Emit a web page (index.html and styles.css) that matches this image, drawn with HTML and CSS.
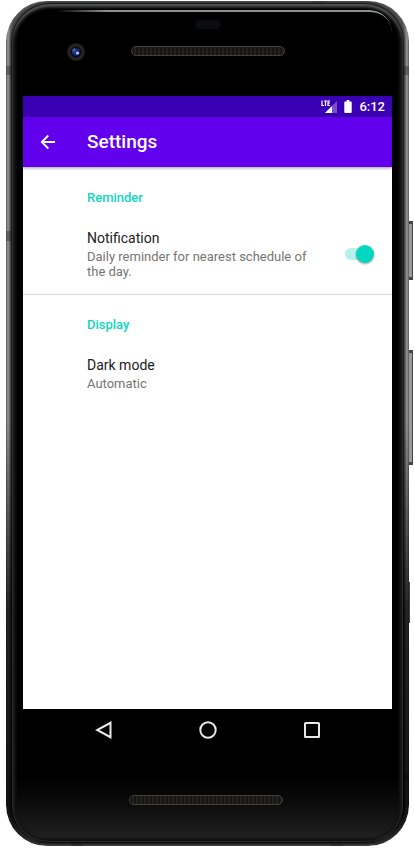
FILE: index.html
```html
<!DOCTYPE html>
<html lang="en">
<head>
<meta charset="utf-8">
<meta name="viewport" content="width=device-width, initial-scale=1">
<title>Settings</title>
<link rel="stylesheet" href="styles.css">
</head>
<body>
<div class="phone">
  <span class="key key-power"></span>
  <span class="key key-volume"></span>
  <span class="key key-lower"></span>
  <div class="body">
    <span class="seam seam-left-top"></span>
    <span class="seam seam-left-mid"></span>
    <span class="seam seam-right-top"></span>
    <span class="seam seam-right-bottom"></span>
    <span class="seam seam-top"></span>
    <span class="seam seam-foot-left"></span>
    <span class="seam seam-foot-right"></span>
    <div class="glass">
      <div class="forehead">
        <span class="sensor"></span>
        <svg class="camera" viewBox="0 0 18 18" aria-hidden="true">
          <circle cx="9" cy="9" r="8.8" fill="#242322"/>
          <circle cx="9" cy="9" r="5.4" fill="#080b20"/>
          <circle cx="9" cy="9" r="3.8" fill="#1b286c"/>
          <path d="M5 7a4 4 0 0 1 3-2l1 3-3 2z" fill="#344894"/>
          <circle cx="10.5" cy="10" r="1.6" fill="#b3c5ff"/>
          <circle cx="7.3" cy="6.8" r=".6" fill="#8396df"/>
        </svg>
        <span class="speaker"></span>
      </div>
      <main class="screen">
        <div class="statusbar">
          <svg class="signal" viewBox="0 0 16 14" aria-hidden="true">
            <path d="M16 1v12H4z" fill="#fff" opacity=".32"/>
            <path d="M11 6v7H4z" fill="#fff"/>
            <path d="M1 .5v5h2M3 1h3M4.500 1v5M9 1H7v4.500h2M7 3h2" fill="none" stroke="#fff" stroke-width="1.200"/>
          </svg>
          <svg class="battery" viewBox="0 0 8 14" aria-hidden="true">
            <path d="M2.500 0h3v1.500H7q1 0 1 1V13q0 1-1 1H1q-1 0-1-1V2.500q0-1 1-1h1.500z" fill="#fff"/>
          </svg>
          <time>6:12</time>
        </div>
        <header class="appbar">
          <button class="back" type="button" aria-label="Navigate up">
            <svg viewBox="0 0 16 16" aria-hidden="true"><path d="M15 8H2M8.300 1.500 1.800 8l6.500 6.500" fill="none" stroke="#fff" stroke-width="1.800"/></svg>
          </button>
          <h1>Settings</h1>
        </header>
        <section class="group">
          <h2>Reminder</h2>
          <div class="item">
            <label class="copy" for="notification">
              <span class="name">Notification</span>
              <span class="summary">Daily reminder for nearest schedule of the day.</span>
            </label>
            <input class="switch" id="notification" type="checkbox" role="switch" checked>
          </div>
        </section>
        <section class="group">
          <h2>Display</h2>
          <button class="item" type="button">
            <span class="copy">
              <span class="name">Dark mode</span>
              <span class="summary">Automatic</span>
            </span>
          </button>
        </section>
      </main>
      <nav class="navbar" aria-label="System">
        <button type="button" aria-label="Back"><svg viewBox="0 0 18 18"><path d="M15.500 1.800v14.400L2.200 9z"/></svg></button>
        <button type="button" aria-label="Home"><svg viewBox="0 0 18 18"><circle cx="9" cy="9" r="7.700"/></svg></button>
        <button type="button" aria-label="Overview"><svg viewBox="0 0 18 18"><rect x="2" y="2" width="14" height="14" rx=".5"/></svg></button>
      </nav>
      <div class="chin"><span class="speaker"></span></div>
    </div>
  </div>
</div>
</body>
</html>
```
FILE: styles.css
```css
* { box-sizing: border-box; }

body {
  margin: 0;
  background: #fff;
  font-family: Roboto, "Liberation Sans", sans-serif;
}

h1, h2 { margin: 0; font-weight: 500; }

button {
  border: 0;
  padding: 0;
  background: none;
  font: inherit;
  text-align: left;
  cursor: pointer;
}

svg { display: block; }

/* Handset */
.phone {
  position: relative;
  display: flex;
  min-height: 100vh;
  padding: 1px 6px 8px;
}

.body {
  position: relative;
  flex: 1;
  display: flex;
  padding: 3px 6px 4px;
  overflow: hidden;
  border-radius: 41px;
  background:
    linear-gradient(#0000 calc(100% - 20px), #111 calc(100% - 8px), #777 100%) center / calc(100% - 70px) 100% no-repeat,
    linear-gradient(90deg, #555, #999 2px, #6668 5px, #0000 7px, #0000 calc(100% - 7px), #6668 calc(100% - 5px), #999 calc(100% - 2px), #555),
    #555;
}

.body::after {
  content: "";
  position: absolute;
  inset: 0;
  background: linear-gradient(#0000 50%, #000b 72%, #000d 96%, #0006 100%);
  pointer-events: none;
  border-radius: 41px;
  padding: 0 6px 4px;
  mask: linear-gradient(#000 0 0) content-box exclude, linear-gradient(#000 0 0);
}

.glass {
  position: relative;
  flex: 1;
  display: flex;
  flex-direction: column;
  padding: 0 11px;
  border-radius: 38px;
  background: linear-gradient(#000 calc(100% - 65px), #0c0c0c calc(100% - 38px), #202020 calc(100% - 5px), #080808);
  box-shadow: inset 0 3px 3px #555, inset 4px 0 3px #141414, inset -4px 0 3px #141414, inset 0 -1px #444, 0 0 3px 1px #000;
}

.glass::before {
  content: "";
  position: absolute;
  top: 6px;
  left: 44px;
  right: 11px;
  height: 20px;
  border-top: 2px solid #899291;
  border-radius: 0 24px 0 0;
  mask: linear-gradient(90deg, #0000, #000 50px);
}

.key {
  position: absolute;
  right: 2px;
  width: 5px;
  border: 1px solid #444;
  border-width: 3px 1px;
  background: #999;
}

.key-power { top: 221px; height: 59px; }
.key-volume { top: 350px; height: 115px; }
.key-lower { top: 582px; right: 5px; width: 2px; height: 41px; background: #444; }

.seam { position: absolute; background: #4449; }
.seam-left-top, .seam-right-top { top: 65px; width: 6px; height: 9px; }
.seam-left-mid { top: 230px; width: 6px; height: 10px; left: 0; }
.seam-left-top { left: 0; }
.seam-right-top { right: 0; }
.seam-right-bottom { right: 0; top: 772px; width: 6px; height: 9px; }
.seam-top { top: 0; right: 84px; width: 12px; height: 4px; }
.seam-foot-left { bottom: 0; left: 65px; width: 12px; height: 4px; }
.seam-foot-right { bottom: 0; right: 66px; width: 12px; height: 4px; }

.forehead {
  position: relative;
  display: flex;
  flex-direction: column;
  align-items: center;
  height: 92px;
}

.sensor {
  width: 26px;
  height: 9px;
  margin-top: 16px;
  border-radius: 5px;
  background: #0b0c11;
}

.camera {
  position: absolute;
  top: 39px;
  left: 44px;
  width: 18px;
  height: 18px;
}

.speaker {
  width: 154px;
  height: 10px;
  margin-top: 17px;
  border: 1px solid #43423f;
  border-radius: 5px;
  background: repeating-linear-gradient(90deg, #171614 0 2px, #24221f 2px 4px);
}

/* Screen */
.screen {
  flex: 1;
  background: #fff;
}

.statusbar {
  display: flex;
  justify-content: flex-end;
  align-items: center;
  gap: 7px;
  height: 21px;
  padding-right: 7px;
  background: #3a00b3;
  color: #fff;
}

.signal { width: 16px; height: 14px; }
.battery { width: 8px; height: 13px; }
.statusbar time { font-size: 13px; font-weight: 500; line-height: 21px; }

.appbar {
  display: flex;
  align-items: center;
  height: 50px;
  background: #6200ee;
  color: #fff;
  box-shadow: 0 1px 3px #0006;
}

.back {
  width: 64px;
  padding: 0 17px;
}

.back svg { width: 16px; height: 16px; }
.appbar h1 { font-size: 19px; line-height: 24px; }

.group { padding: 23px 0 15px; }
.group + .group { padding-top: 22px; border-top: 1px solid #dadada; }

.group h2 {
  padding-left: 64px;
  color: #12d6c0;
  font-size: 13px;
  line-height: 16px;
}

.item {
  display: flex;
  align-items: center;
  width: 100%;
  margin-top: 23px;
  padding: 0 18px 0 64px;
}

.copy {
  flex: 1;
  display: flex;
  flex-direction: column;
  gap: 2px;
  padding-right: 30px;
}

.name { color: #212121; font-size: 14px; line-height: 18px; }
.summary { color: #757575; font-size: 13px; line-height: 15px; }

.switch {
  position: relative;
  appearance: none;
  width: 29px;
  height: 20px;
  margin: 0;
}

.switch::before {
  content: "";
  position: absolute;
  inset: 4px 2px 4px 0;
  border-radius: 6px;
  background: #b5f2e9;
}

.switch::after {
  content: "";
  position: absolute;
  top: 1px;
  right: 0;
  width: 18px;
  height: 18px;
  border-radius: 50%;
  background: #03d7c1;
  box-shadow: 0 1px 2px #0006;
}

/* System navigation */
.navbar {
  display: flex;
  justify-content: center;
  gap: 86px;
  padding-top: 12px;
}

.navbar svg {
  width: 18px;
  height: 18px;
  fill: none;
  stroke: #e8e8e8;
  stroke-width: 2;
}

.chin {
  display: flex;
  justify-content: center;
  height: 103px;
  padding: 40px 3px 0 0;
}

.chin .speaker { margin-top: 16px; }
```
